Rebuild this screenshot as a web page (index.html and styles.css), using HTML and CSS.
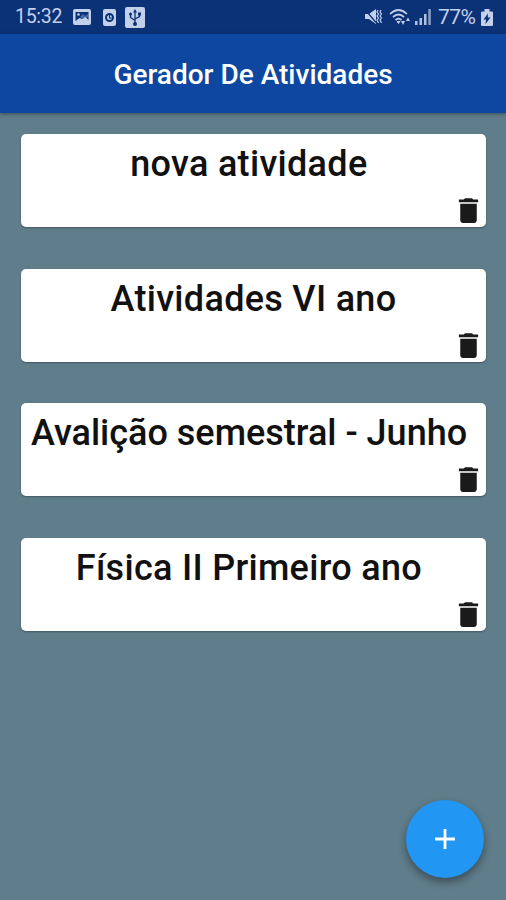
FILE: index.html
```html
<!DOCTYPE html>
<html lang="pt-BR">
<head>
  <meta charset="UTF-8">
  <meta name="viewport" content="width=device-width, initial-scale=1.0">
  <title>Gerador De Atividades</title>
  <link rel="stylesheet" href="styles.css">
</head>
<body>
  <svg width="0" height="0" class="sprite">
    <symbol id="delete" viewBox="0 0 24 24">
      <path d="M6 19c0 1.100.9 2 2 2h8c1.100 0 2-.9 2-2V7H6v12zM19 4h-3.500l-1-1h-5l-1 1H5v2h14V4z"/>
    </symbol>
  </svg>

  <div class="status-bar">
    <div class="status-left">
      <span class="clock">15:32</span>
      <svg class="icon-image" width="18" height="16" viewBox="0 0 18 16">
        <path fill-rule="evenodd" d="M2 0h14q2 0 2 2v12q0 2-2 2H2q-2 0-2-2V2q0-2 2-2zM2.500 3v9l4-3 3 1 3-2 3 3V3z"/>
        <circle cx="5.500" cy="5.500" r="1.300"/>
        <path d="M7 8l3-3 2 2 3-2v3l-5 2z" opacity=".35"/>
      </svg>
      <svg class="icon-alarm" width="13" height="17" viewBox="0 0 13 17">
        <rect width="13" height="17" rx="2"/>
        <circle cx="6.500" cy="8.500" r="3.500" fill="none" stroke="#0b3277" stroke-width="2"/>
        <path d="M6.500 6v3H9" fill="none" stroke="#0b3277" stroke-width="1.200"/>
      </svg>
      <svg class="icon-usb" width="20" height="21" viewBox="0 0 20 21">
        <rect width="20" height="21" rx="2"/>
        <g fill="none" stroke="#0b3277" stroke-width="1.300">
          <path d="M10 4v12M5.500 7v3.500l4.500 3M14.500 7v2.500L10 12"/>
        </g>
        <g fill="#0b3277">
          <path d="M10 2l2 3.500H8z"/>
          <circle cx="10" cy="17" r="2"/>
          <circle cx="5.500" cy="7" r="1.500"/>
          <path d="M13 5.500h3v3h-3z"/>
        </g>
      </svg>
    </div>
    <div class="status-right">
      <svg class="icon-mute" width="18" height="18" viewBox="0 0 18 18">
        <path d="M0 6h4l7-5v15l-7-5H0z"/>
        <path d="M0 1.500l11 13" stroke="#0b3277" stroke-width="1.300"/>
        <path d="M13 2l-1 2 1.500 2-1.500 2 1.500 2-1.500 2 1.500 3M16 2l-1 2 1.500 2-1.500 2 1.500 2-1.500 2 1.500 3" fill="none" stroke="#c3d0ea" stroke-width="1.200"/>
      </svg>
      <svg class="icon-wifi" width="22" height="18" viewBox="0 0 22 18">
        <g fill="none" stroke="#c3d0ea" stroke-width="1.700">
          <path d="M1 6q8.500-8 17 0M4 9q5.500-5 11 0M6.500 12q3-2.600 6 0"/>
        </g>
        <path d="M9.500 16l-2-2.500q2-1.500 4 0zM12 13h4l-2 4zM17 13h4l-2-3.500z"/>
      </svg>
      <svg class="icon-signal" width="16" height="16" viewBox="0 0 16 16">
        <path d="M0 12h2.500v4H0zM4.500 9H7v7H4.500zM9 5h2.500v11H9z" opacity=".9"/>
        <path d="M13.300 0h2.500v16h-2.500z" opacity=".7"/>
      </svg>
      <span class="battery-level">77%</span>
      <svg class="icon-battery" width="12" height="17" viewBox="0 0 12 17">
        <path d="M3.500 0h5v2.500H11q1 0 1 1V16q0 1-1 1H1q-1 0-1-1V3.500q0-1 1-1h2.500z"/>
        <path d="M7 4.500L2.500 10.500H5L4.500 15l5-6.500H6.800z" fill="#0b3277"/>
      </svg>
    </div>
  </div>

  <header class="app-bar">
    <h1 class="app-title">Gerador De Atividades</h1>
  </header>

  <main class="activity-list">
    <div class="activity-card">
      <h2 class="activity-title">nova atividade </h2>
      <svg class="delete-icon"><use href="#delete"/></svg>
    </div>
    <div class="activity-card">
      <h2 class="activity-title">Atividades VI ano</h2>
      <svg class="delete-icon"><use href="#delete"/></svg>
    </div>
    <div class="activity-card">
      <h2 class="activity-title long">Avalição semestral - Junho </h2>
      <svg class="delete-icon"><use href="#delete"/></svg>
    </div>
    <div class="activity-card">
      <h2 class="activity-title">Física II Primeiro ano </h2>
      <svg class="delete-icon"><use href="#delete"/></svg>
    </div>
  </main>

  <button class="fab" aria-label="Adicionar">
    <svg width="34" height="34" viewBox="0 0 24 24"><path d="M19 13h-6v6h-2v-6H5v-2h6V5h2v6h6v2z"/></svg>
  </button>
</body>
</html>
```

FILE: styles.css
```css
* {
  box-sizing: border-box;
}

body {
  margin: 0;
  height: 900px;
  overflow: hidden;
  font-family: Roboto, sans-serif;
  background: #607d8b;
}

.sprite {
  position: absolute;
}

.status-bar {
  height: 34px;
  padding: 0 13px 0 15px;
  display: flex;
  align-items: center;
  justify-content: space-between;
  background: #0b3277;
  color: #c3d0ea;
  fill: #c3d0ea;
}

.status-left,
.status-right {
  display: flex;
  align-items: center;
}

.clock {
  width: 47px;
  margin-right: 11px;
  font-size: 19.500px;
  letter-spacing: -0.3px;
  line-height: 34px;
}

.icon-alarm {
  margin: 0 9px 0 12px;
}

.icon-wifi {
  margin: 0 4px 0 6px;
}

.battery-level {
  width: 38px;
  margin: 0 5px 0 7px;
  font-size: 21px;
  letter-spacing: -0.5px;
  line-height: 34px;
}

.app-bar {
  position: relative;
  height: 79px;
  padding-top: 1px;
  display: flex;
  align-items: center;
  justify-content: center;
  background: #0d47a1;
  box-shadow: 0 1px 4px rgba(0, 0, 0, 0.4);
}

.app-title {
  margin: 0;
  font-size: 28px;
  font-weight: 500;
  line-height: 33px;
  color: #fff;
  white-space: nowrap;
}

.activity-list {
  padding: 21px 20px 0 21px;
  display: flex;
  flex-direction: column;
  gap: 41.700px;
}

.activity-card {
  height: 93px;
  display: flex;
  flex-direction: column;
  align-items: center;
  justify-content: space-between;
  background: #fff;
  border-radius: 5px;
  box-shadow: 0 1px 2px rgba(0, 0, 0, 0.3);
}

.activity-title {
  margin: 9px 0 0;
  font-size: 36px;
  font-weight: 500;
  line-height: 43px;
  letter-spacing: 0.3px;
  color: #111;
  white-space: pre;
}

.activity-title.long {
  letter-spacing: 0;
}

.delete-icon {
  width: 33px;
  height: 33px;
  margin-right: 1px;
  align-self: flex-end;
  fill: #1a1a1a;
}

.fab {
  position: absolute;
  right: 22px;
  bottom: 22px;
  width: 78px;
  height: 78px;
  padding: 0;
  border: none;
  border-radius: 50%;
  display: flex;
  align-items: center;
  justify-content: center;
  background: #2196f3;
  fill: #fff;
  box-shadow: 0 4px 9px rgba(0, 0, 0, 0.4);
}
```
